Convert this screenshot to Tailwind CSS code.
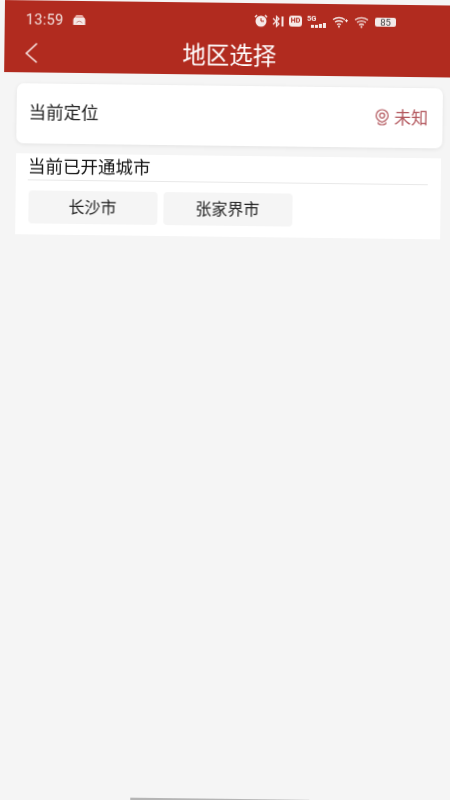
<!DOCTYPE html>
<html lang="zh">
  <head>
    <meta charset="UTF-8" />
    <meta name="viewport" content="width=device-width, initial-scale=1.0" />
    <title>地区选择</title>
    <script src="https://cdn.jsdelivr.net/npm/@tailwindcss/browser@4"></script>
  </head>
  <body class="h-[800px] w-[450px] overflow-hidden bg-[#f5f5f5] font-['Roboto','Noto_Sans_CJK_SC',sans-serif]">
    <!-- the shot is slightly tilted and soft, so the whole screen is turned and blurred a bit -->
    <div class="flex h-[812px] w-[470px] origin-top-left rotate-[0.7deg] flex-col pl-[5px] blur-[0.4px]">
      <!-- header -->
      <header class="h-[72px] w-[450px] bg-[#b12b1f] text-white">
        <div class="flex h-[32px] items-center pt-[8px] pl-[21px] pr-[30px]">
          <span class="text-[14.5px] leading-none tracking-[0.3px] text-[#f3e3e0]">13:59</span>
          <svg class="ml-[8px] mb-[2px]" width="15" height="12" viewBox="0 0 14 12">
            <path d="M1 11V6.500Q1 3 4 3H10Q13 3 13 6.500V11Z" fill="#f5e9e7" />
            <rect x="3" y="1" width="8" height="3" rx="1.500" fill="#e8a9a2" />
            <path d="M4 9Q7 5.500 10 9" fill="none" stroke="#c98a83" stroke-width="1" />
          </svg>
        </div>
        <div class="relative flex h-[40px] items-center justify-center">
          <svg class="absolute left-[19px] top-[8px]" width="16" height="24" viewBox="0 0 16 24">
            <path d="M13.500 3L3 13L13.500 22" fill="none" stroke="#fbeeec" stroke-width="1.500" />
          </svg>
          <h1 class="pt-[3px] text-[23.500px] font-normal leading-none">地区选择</h1>
        </div>
      </header>

      <main class="flex w-[450px] flex-1 flex-col">
        <!-- current location -->
        <section class="mt-[11px] ml-[13px] flex h-[60px] w-[425.500px] items-center justify-between rounded-[7px] bg-white pl-[12px] pr-[14px] shadow-[0_1px_4px_rgba(0,0,0,0.08)]">
          <span class="pb-[2px] text-[17.500px] text-[#222222]">当前定位</span>
          <div class="flex items-center gap-[5px] text-[#b2565c]">
            <svg width="15" height="18" viewBox="0 0 15 18" fill="none" stroke="currentColor" stroke-width="1.200">
              <path d="M7.500 1A6 6 0 0 1 13.500 7C13.500 10 10 12.500 7.500 13.500C5 12.500 1.500 10 1.500 7A6 6 0 0 1 7.500 1Z" />
              <circle cx="7.500" cy="6.800" r="2.500" />
              <path d="M4 13.500C1.500 16.800 13.500 16.800 11 13.500" />
            </svg>
            <span class="text-[17px] leading-none">未知</span>
          </div>
        </section>

        <!-- opened cities -->
        <section class="mt-[10px] ml-[12.500px] h-[81px] w-[425px] bg-white">
          <div class="mx-[12.500px] h-[27px] border-b border-[#e8e8e8] text-[17.500px] leading-[27px] text-[#111111]">当前已开通城市</div>
          <div class="flex gap-[6px] pt-[10px] pl-[13px]">
            <div class="flex h-[33px] w-[129px] items-center justify-center rounded-[4px] bg-[#f5f5f5] text-[16px] text-[#222222]">长沙市</div>
            <div class="flex h-[33px] w-[129px] items-center justify-center rounded-[4px] bg-[#f5f5f5] text-[16px] text-[#222222]">张家界市</div>
          </div>
        </section>

        <div class="mt-auto mb-[13px] ml-[135px] h-[3px] w-[179px] bg-[#b5b5b5]"></div>
      </main>
    </div>

    <!-- status bar icons, drawn over the tilted header -->
    <div class="absolute left-[254px] top-[15px] flex rotate-[0.7deg] items-center gap-[4px] text-[#f6e9e7] blur-[0.3px]">
      <svg width="14" height="13" viewBox="0 0 14 13"><circle cx="7" cy="7" r="5.500" fill="currentColor" /><path d="M7 4V7H10" stroke="#b12b1f" fill="none" /><path d="M1 3L3 1M13 3L11 1" stroke="currentColor" stroke-width="1.500" /></svg>
      <svg width="13" height="12" viewBox="0 0 13 12" fill="none" stroke="currentColor" stroke-width="1.200"><path d="M1 3L7 8.500L4.500 11V1L7 3.500L1 9" /><path d="M10.500 1V11" stroke-width="2" /></svg>
      <span class="flex h-[11px] w-[13px] items-center justify-center rounded-[3px] bg-[#f6e9e7] text-[7px] font-bold leading-none text-[#b12b1f]">HD</span>
      <div class="relative ml-[1px] h-[12px] w-[21px]">
        <span class="absolute left-0 top-[-1px] text-[7.500px] font-bold leading-none">5G</span>
        <div class="absolute bottom-0 left-[4px] flex items-end gap-[1.500px]">
          <i class="h-[3px] w-[2.500px] bg-current"></i><i class="h-[3px] w-[2.500px] bg-current"></i><i class="h-[4px] w-[2.500px] bg-current"></i><i class="h-[5px] w-[2.500px] bg-current"></i>
        </div>
      </div>
      <svg width="16" height="12" viewBox="0 0 16 12" fill="none" stroke="currentColor" stroke-width="1.300"><path d="M1 3.500Q7 -0.500 13 3.500M3 6Q7 3.500 11 6M5 8.500Q7 7.200 9 8.500" /><circle cx="7" cy="10.500" r="1" fill="currentColor" stroke="none" /><path d="M14.500 3V6M13 4.500H16" stroke-width="1" /></svg>
      <svg class="ml-[2px]" width="15" height="12" viewBox="0 0 15 12" fill="none" stroke="currentColor" stroke-width="1.300"><path d="M1 3.500Q7.500 -0.800 14 3.500M3 6Q7.500 3.200 12 6M5 8.500Q7.500 7 10 8.500" /><circle cx="7.500" cy="10.500" r="1" fill="currentColor" stroke="none" /></svg>
      <div class="ml-[2px] flex h-[9px] w-[21px] items-center justify-center rounded-[2px] bg-[#f3e9e8] text-[9.500px] leading-none text-[#444444]">85</div>
    </div>
  </body>
</html>
